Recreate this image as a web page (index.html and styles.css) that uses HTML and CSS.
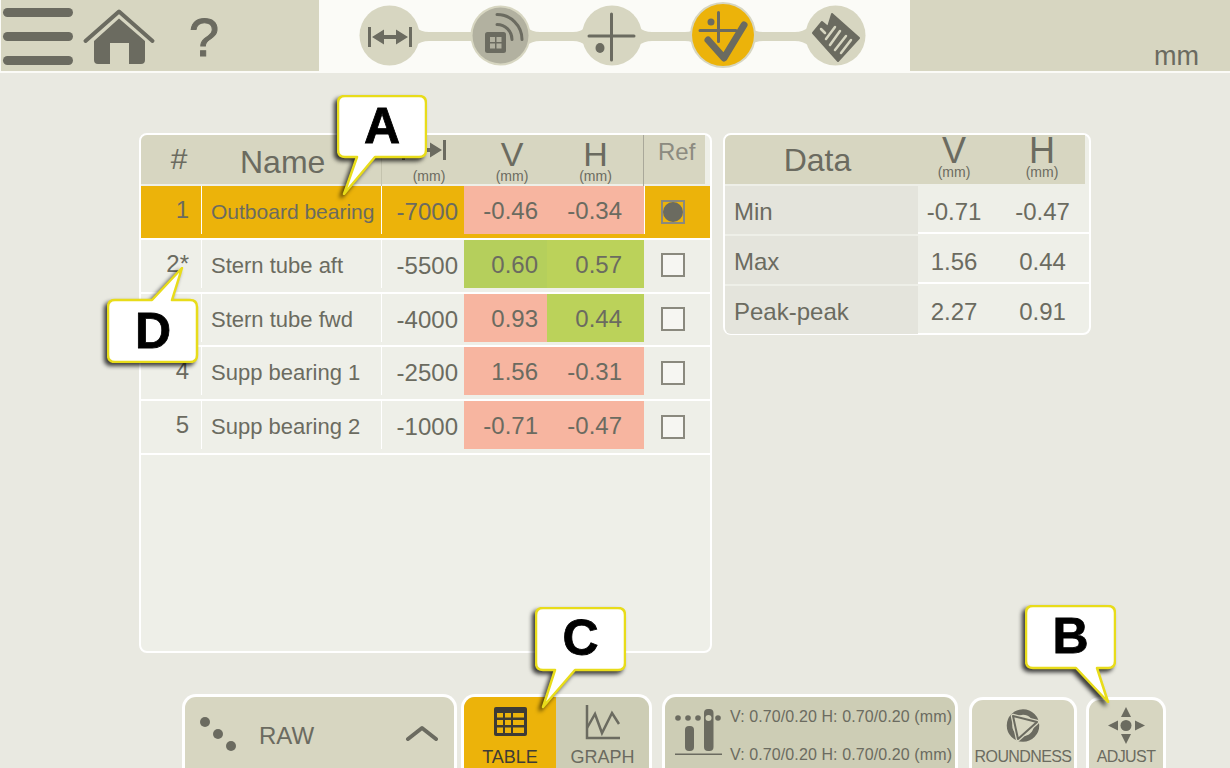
FILE: index.html
```html
<!DOCTYPE html>
<html lang="en">
<head>
    <meta charset="UTF-8">
    <title>Alignment result table</title>
    <link rel="stylesheet" href="styles.css">
</head>
<body>
    <header class="topbar">
        <div class="topbar-left">
            <svg class="menu-icon" width="74" height="71" viewBox="0 0 74 71">
                <rect x="2" y="8" width="70" height="9" rx="4.5"/>
                <rect x="2" y="32" width="70" height="9" rx="4.5"/>
                <rect x="2" y="56" width="70" height="9" rx="4.5"/>
            </svg>
            <svg class="home-icon" width="74" height="71" viewBox="82 0 74 71">
                <path class="home-roof" d="M85.5 41 119 11.5 152.5 41"/>
                <path d="M119 18.5 145 41V60q0 4-4 4H129V43H110V64H98q-4 0-4-4V41Z"/>
            </svg>
            <span class="help-icon">?</span>
        </div>
        <div class="topbar-steps">
            <svg width="591" height="71" viewBox="319 0 591 71">
                <g class="step-bg">
                    <path d="M415 27q6 5 14 5h41q8 0 12-5v19q-4-5-12-5h-41q-8 0-14 5Z"/>
                    <path d="M526 27q6 5 14 5h33q8 0 13-5v19q-5-5-13-5h-33q-8 0-14 5Z"/>
                    <path d="M638 27q6 5 14 5h33q8 0 12-5v19q-4-5-12-5h-33q-8 0-14 5Z"/>
                    <path d="M749 27q6 5 14 5h32q8 0 14-5v19q-6-5-14-5h-32q-8 0-14 5Z"/>
                    <circle cx="389.5" cy="35.5" r="30"/>
                    <circle cx="500.5" cy="35.5" r="30"/>
                    <circle cx="612" cy="35.5" r="30"/>
                    <circle cx="723" cy="35" r="33"/>
                    <circle cx="835.5" cy="35.5" r="30"/>
                </g>
                <circle class="step-current" cx="500.5" cy="35.5" r="28"/>
                <circle class="step-active" cx="723" cy="35" r="31"/>

                <g class="ink">
                    <rect x="368" y="27" width="3" height="20"/>
                    <rect x="409" y="27" width="3" height="20"/>
                    <path d="M372 37 384 29.5V35H396V29.5L408 37 396 44.500V39H384V44.500Z"/>
                </g>

                <g class="ink">
                    <rect x="485" y="32" width="21" height="21" rx="2.5"/>
                    <rect class="step-window" x="490" y="37" width="5" height="5"/>
                    <rect class="step-window" x="496.5" y="37" width="5" height="5"/>
                    <rect class="step-window" x="490" y="43.5" width="5" height="5"/>
                    <rect class="step-window" x="496.5" y="43.5" width="5" height="5"/>
                </g>
                <path class="ink-line" d="M497 14.5A25 25 0 0 1 522 39.5M497 24.5A15 15 0 0 1 512 39.5"/>

                <path class="ink-line" d="M611.5 14V60M589 36H634"/>
                <ellipse class="ink" cx="600" cy="48" rx="4.5" ry="5"/>

                <path class="ink-line" d="M718.5 12.5V41.5M700 30.5H736"/>
                <circle class="ink" cx="711" cy="22" r="3.5"/>
                <path class="check-line" d="M708 40 724 58 744 25"/>

                <path class="ink floppy-body" d="M832 14 859 38 838 61 813 33 822 22 828 27Z"/>
                <path class="floppy-stripes" d="M835 27 826 39M840 31 830 45M846 36 835 50M851 40 841 53"/>
                <path class="floppy-stripes" d="M821 29 825 33"/>
            </svg>
        </div>
        <div class="topbar-right"><span class="unit">mm</span></div>
    </header>

    <main class="content">
        <section class="panel results">
            <div class="results-head">
                <div class="head-num">#</div>
                <div class="head-name">Name</div>
                <div class="head-axis head-pos">
                    <svg class="distance-icon" width="48" height="22" viewBox="366 26 48 22">
                        <g class="ink">
                            <rect x="368" y="27" width="3" height="20"/>
                            <rect x="409" y="27" width="3" height="20"/>
                            <path d="M372 37 384 29.5V35H396V29.5L408 37 396 44.500V39H384V44.500Z"/>
                        </g>
                    </svg>
                    <small>(mm)</small>
                </div>
                <div class="head-axis head-v"><span>V</span><small>(mm)</small></div>
                <div class="head-axis"><span>H</span><small>(mm)</small></div>
                <div class="head-ref">Ref</div>
            </div>

            <div class="result-row selected">
                <div class="cell num">1</div>
                <div class="cell name small-name">Outboard bearing</div>
                <div class="cell pos">-7000</div>
                <div class="cell val-v bad">-0.46</div>
                <div class="cell val-h bad">-0.34</div>
                <div class="cell ref"><span class="checkbox checked"></span></div>
            </div>
            <div class="result-row">
                <div class="cell num">2*</div>
                <div class="cell name">Stern tube aft</div>
                <div class="cell pos">-5500</div>
                <div class="cell val-v good">0.60</div>
                <div class="cell val-h good-h">0.57</div>
                <div class="cell ref"><span class="checkbox"></span></div>
            </div>
            <div class="result-row">
                <div class="cell num">3</div>
                <div class="cell name">Stern tube fwd</div>
                <div class="cell pos">-4000</div>
                <div class="cell val-v bad">0.93</div>
                <div class="cell val-h good-h">0.44</div>
                <div class="cell ref"><span class="checkbox"></span></div>
            </div>
            <div class="result-row">
                <div class="cell num">4</div>
                <div class="cell name">Supp bearing 1</div>
                <div class="cell pos">-2500</div>
                <div class="cell val-v bad">1.56</div>
                <div class="cell val-h bad">-0.31</div>
                <div class="cell ref"><span class="checkbox"></span></div>
            </div>
            <div class="result-row">
                <div class="cell num">5</div>
                <div class="cell name">Supp bearing 2</div>
                <div class="cell pos">-1000</div>
                <div class="cell val-v bad">-0.71</div>
                <div class="cell val-h bad">-0.47</div>
                <div class="cell ref"><span class="checkbox"></span></div>
            </div>
        </section>

        <section class="panel summary">
            <div class="summary-head">
                <div class="summary-title">Data</div>
                <div class="head-axis"><span>V</span><small>(mm)</small></div>
                <div class="head-axis summary-h"><span>H</span><small>(mm)</small></div>
            </div>
            <div class="summary-row">
                <div class="summary-label">Min</div>
                <div class="summary-val">-0.71</div>
                <div class="summary-val">-0.47</div>
            </div>
            <div class="summary-row">
                <div class="summary-label">Max</div>
                <div class="summary-val">1.56</div>
                <div class="summary-val">0.44</div>
            </div>
            <div class="summary-row">
                <div class="summary-label">Peak-peak</div>
                <div class="summary-val">2.27</div>
                <div class="summary-val">0.91</div>
            </div>
        </section>
    </main>

    <footer class="toolbar">
        <div class="tool tool-raw">
            <svg width="54" height="40" viewBox="197 714 54 40">
                <circle class="ink" cx="205" cy="722" r="5"/>
                <circle class="ink" cx="218" cy="734" r="5"/>
                <circle class="ink" cx="231" cy="746" r="5"/>
            </svg>
            <span class="raw-label">RAW</span>
            <svg class="raw-chevron" width="34" height="16" viewBox="404 725 34 16">
                <path d="M407 739 421 728 435 739"/>
            </svg>
        </div>

        <div class="tool tool-views">
            <div class="view view-on">
                <svg width="33" height="30" viewBox="494 707 33 30">
                    <rect class="table-frame" x="494" y="707" width="33" height="29" rx="2"/>
                    <g class="table-cells">
                        <rect x="497" y="713" width="6" height="4.500"/><rect x="505" y="713" width="6" height="4.500"/><rect x="513" y="713" width="11" height="4.500"/>
                        <rect x="497" y="720" width="6" height="5"/><rect x="505" y="720" width="6" height="5"/><rect x="513" y="720" width="11" height="5"/>
                        <rect x="497" y="727.500" width="6" height="5.500"/><rect x="505" y="727.500" width="6" height="5.500"/><rect x="513" y="727.500" width="11" height="5.500"/>
                    </g>
                </svg>
                <span>TABLE</span>
            </div>
            <div class="view">
                <svg class="graph-icon" width="36" height="36" viewBox="586 703 36 36">
                    <path d="M588 704V737H621"/>
                    <path d="M588 727 596 713 603 732 613 712 620 723"/>
                </svg>
                <span>GRAPH</span>
            </div>
        </div>

        <div class="tool tool-info">
            <svg class="info-icon" width="50" height="50" viewBox="674 706 50 50">
                <circle class="ink" cx="678" cy="718" r="2.8"/>
                <circle class="ink" cx="688" cy="718" r="2.8"/>
                <circle class="ink" cx="698" cy="718" r="2.8"/>
                <circle class="ink" cx="718" cy="718" r="2.8"/>
                <rect class="ink" x="685" y="726" width="9" height="25" rx="4"/>
                <rect class="ink" x="704" y="709" width="9.5" height="42" rx="4"/>
                <circle class="info-dot" cx="708.5" cy="718" r="3"/>
                <rect class="ink" x="675" y="753.5" width="47" height="1.5"/>
            </svg>
            <div class="info-lines">
                <div>V: 0.70/0.20 H: 0.70/0.20 (mm)</div>
                <div>V: 0.70/0.20 H: 0.70/0.20 (mm)</div>
            </div>
        </div>

        <div class="tool tool-small tool-round">
            <svg width="36" height="40" viewBox="1004 706 36 40">
                <circle class="round-ring" cx="1022" cy="725.5" r="13.5"/>
                <path class="round-gap" d="M1012 716 1036 722 1017 739Z"/>
                <path class="round-tri" d="M1012 716 1036 722 1017 739Z"/>
            </svg>
            <span>ROUNDNESS</span>
        </div>

        <div class="tool tool-small tool-adjust">
            <svg width="40" height="40" viewBox="1104 706 40 40">
                <g class="ink">
                    <circle cx="1124" cy="725.5" r="5.5"/>
                    <path d="M1124 707 1129 717H1119Z"/>
                    <path d="M1124 744 1129 734H1119Z"/>
                    <path d="M1106 725.5 1116 720.5V730.5Z"/>
                    <path d="M1143 725.5 1133 720.5V730.5Z"/>
                </g>
            </svg>
            <span>ADJUST</span>
        </div>
    </footer>

    <!-- manual callouts drawn over the screen -->
    <div class="callout callout-a">
        <svg width="90" height="100" viewBox="0 0 90 100"><path d="M8 1H82Q89 1 89 8V55Q89 62 82 62H38L7 99 20 62H8Q1 62 1 55V8Q1 1 8 1Z"/></svg>
        <span>A</span>
    </div>
    <div class="callout callout-d">
        <svg width="92" height="96" viewBox="0 0 92 96"><path d="M8 33H45L75 1 65 33H83Q90 33 90 40V88Q90 95 83 95H8Q1 95 1 88V40Q1 33 8 33Z"/></svg>
        <span>D</span>
    </div>
    <div class="callout callout-c">
        <svg width="91" height="102" viewBox="0 0 91 102"><path d="M8 1H83Q90 1 90 8V56Q90 63 83 63H40L8 100 20 63H8Q1 63 1 56V8Q1 1 8 1Z"/></svg>
        <span>C</span>
    </div>
    <div class="callout callout-b">
        <svg width="91" height="98" viewBox="0 0 91 98"><path d="M8 1H83Q90 1 90 8V56Q90 63 83 63H72L83 97 51 63H8Q1 63 1 56V8Q1 1 8 1Z"/></svg>
        <span>B</span>
    </div>
</body>
</html>
```

FILE: styles.css
```css
* {
    margin: 0;
    padding: 0;
    box-sizing: border-box;
    font-family: "Liberation Sans", Arial, sans-serif;
}

body {
    position: relative;
    width: 1230px;
    height: 768px;
    overflow: hidden;
    background: #e9e9e1;
    color: #6b6b60;
}

.ink {
    fill: #6b6b60;
}

.ink-line {
    fill: none;
    stroke: #6b6b60;
    stroke-width: 3;
    stroke-linecap: round;
}

/* top bar */
.topbar {
    display: flex;
    height: 73px;
    border-bottom: 2px solid #fbfbf7;
    background: #fbfbf7;
}

.topbar-left {
    display: flex;
    align-items: flex-start;
    width: 318px;
    margin-left: 1px;
    background: #d7d6c1;
}

.menu-icon {
    fill: #6b6b60;
    margin-right: 7px;
}

.home-icon {
    fill: #6b6b60;
}

.home-roof {
    fill: none;
    stroke: #6b6b60;
    stroke-width: 4;
    stroke-linecap: round;
    stroke-linejoin: round;
}

.help-icon {
    margin-left: 33px;
    font-size: 54px;
    line-height: 74px;
    -webkit-text-stroke: 1px #6b6b60;
}

.topbar-steps {
    width: 591px;
}

.step-bg {
    fill: #d7d6c1;
}

.step-current {
    fill: #b2b1a0;
}

.step-active {
    fill: #ecb30a;
}

.step-window {
    fill: #b2b1a0;
}

.check-line {
    fill: none;
    stroke: #6b6b60;
    stroke-width: 7;
    stroke-linecap: round;
    stroke-linejoin: round;
}

.floppy-body {
    stroke: #6b6b60;
    stroke-width: 2;
    stroke-linejoin: round;
}

.floppy-stripes {
    fill: none;
    stroke: #d7d6c1;
    stroke-width: 2.5;
    stroke-linecap: round;
}

.topbar-right {
    flex: 1;
    display: flex;
    justify-content: flex-end;
    align-items: flex-end;
    padding-right: 31px;
    background: #d7d6c1;
}

.unit {
    font-size: 27px;
    line-height: 30px;
}

/* tables */
.content {
    display: flex;
    align-items: flex-start;
    gap: 11px;
    height: 520px;
    margin: 60px 0 0 139px;
}

.panel {
    border: 2px solid #fff;
    border-radius: 8px;
    background: #eeefe8;
}

.results {
    width: 573px;
    height: 520px;
}

.results-head {
    display: grid;
    grid-template-columns: 60px 180px 83px 83px 97px 61px;
    width: 564px;
    height: 49px;
    margin-bottom: 2px;
    border-radius: 6px 0 0 0;
    background: #d7d6c1;
}

.head-num {
    padding-left: 16px;
    text-align: center;
    font-size: 30px;
    line-height: 48px;
}

.head-name {
    padding-left: 39px;
    font-size: 32px;
    line-height: 54px;
}

.head-axis {
    display: flex;
    flex-direction: column;
    align-items: center;
}

.head-axis span {
    margin-top: 4px;
    font-size: 34px;
    line-height: 30px;
}

.head-axis small {
    font-size: 14px;
    line-height: 14px;
}

.head-pos {
    border-left: 1px solid #c4c3ae;
}

.head-pos small {
    margin-left: 12px;
}

.head-v {
    padding-left: 13px;
}

.distance-icon {
    margin: 4px 0 8px 2px;
}

.head-ref {
    margin-left: -1px;
    border-left: 1px solid #a9a89a;
    padding-left: 14px;
    font-size: 24px;
    line-height: 34px;
    color: #8c8b80;
}

.result-row {
    display: grid;
    grid-template-columns: 61px 179px 83px 83px 97px 65px;
    align-items: start;
    height: 53.75px;
    border-bottom: 2px solid #fff;
}

.result-row.selected {
    background: #ecb30a;
}

.cell {
    height: 48px;
    line-height: 52px;
    font-size: 24px;
}

.num {
    border-right: 1px solid #fff;
    padding-right: 12px;
    text-align: right;
    line-height: 48px;
}

.name {
    padding-left: 9px;
    font-size: 22px;
}

.small-name {
    font-size: 21px;
}

.pos {
    border-left: 1px solid #fff;
    padding-right: 6px;
    text-align: right;
}

.val-v,
.val-h {
    line-height: 50px;
    text-align: right;
}

.val-v {
    padding-right: 9px;
}

.val-h {
    padding-right: 22px;
}

.bad {
    background: #f7b5a0;
}

.good {
    background: #b5cf5c;
}

.good-h {
    background: #bbd25a;
}

.ref {
    display: flex;
    align-items: center;
    padding: 3px 0 0 17px;
}

.selected .ref {
    border-left: 1px solid #fff;
    padding-left: 16px;
}

.checkbox {
    display: flex;
    align-items: center;
    justify-content: center;
    width: 24px;
    height: 24px;
    border: 2px solid #8a897e;
    background: #f6f6f2;
}

.checkbox.checked {
    background: #ecb30a;
}

.checkbox.checked::after {
    content: "";
    width: 20px;
    height: 20px;
    border-radius: 50%;
    background: #6b6b60;
}

.summary {
    width: 368px;
    height: 202px;
}

.summary-head {
    display: grid;
    grid-template-columns: 193px 72px 95px;
    width: 360px;
    height: 49px;
    border-radius: 6px 0 0 0;
    background: #d7d6c1;
}

.summary-title {
    padding-right: 8px;
    text-align: center;
    font-size: 32px;
    line-height: 50px;
}

.summary-head .head-axis span {
    margin-top: 2px;
    font-size: 36px;
    line-height: 28px;
}

.summary-h {
    padding-left: 9px;
}

.summary-row {
    display: grid;
    grid-template-columns: 193px 72px 100px;
    height: 50px;
    padding-top: 2px;
    box-shadow: 0 -2px 0 #fff inset;
    font-size: 24px;
    line-height: 52px;
}

.summary-row:last-child {
    box-shadow: none;
}

.summary-label {
    height: 48px;
    padding-left: 9px;
    background: #e4e4dc;
}

.summary-row:last-child .summary-label {
    border-radius: 0 0 0 6px;
}

.summary-val {
    height: 48px;
    text-align: center;
}

.summary-val:last-child {
    padding-left: 5px;
}

/* bottom toolbar */
.toolbar {
    display: flex;
    align-items: flex-start;
    margin: 41px 0 0 182px;
}

.tool {
    border: 3px solid #fff;
    border-bottom: none;
    border-radius: 14px 14px 0 0;
    height: 74px;
    background: #d7d6c1;
    overflow: hidden;
}

.tool-raw {
    display: flex;
    width: 275px;
    padding: 17px 0 0 12px;
}

.raw-label {
    margin-left: 8px;
    font-size: 24px;
    line-height: 44px;
}

.raw-chevron {
    margin: 11px 0 0 91px;
    fill: none;
    stroke: #6b6b60;
    stroke-width: 4;
    stroke-linecap: round;
    stroke-linejoin: round;
}

.tool-views {
    display: flex;
    width: 191px;
    margin-left: 4px;
    background: #cdcdb5;
}

.view {
    display: flex;
    flex-direction: column;
    align-items: center;
    width: 93px;
    padding-top: 7px;
    font-size: 18px;
    line-height: 18px;
}

.view-on {
    width: 92px;
    padding-top: 10px;
    background: #ecb30a;
    color: #3d3b36;
}

.view-on svg {
    margin-bottom: 11px;
}

.table-frame {
    fill: #3d3b36;
}

.table-cells {
    fill: #ecb30a;
}

.graph-icon {
    margin-bottom: 8px;
    fill: none;
    stroke: #6b6b60;
    stroke-width: 2.5;
}

.tool-info {
    display: flex;
    width: 296px;
    margin-left: 10px;
    padding-left: 9px;
    background: #cdcdb5;
}

.info-icon {
    margin-top: 9px;
    flex: none;
}

.info-dot {
    fill: #cdcdb5;
}

.info-lines {
    margin-left: 6px;
    padding-top: 1px;
    font-size: 16px;
    letter-spacing: 0.1px;
    line-height: 38px;
    white-space: nowrap;
}

.tool-small {
    display: flex;
    flex-direction: column;
    align-items: center;
    height: 71px;
    margin-top: 3px;
    padding-top: 6px;
    font-size: 16px;
    line-height: 18px;
    white-space: nowrap;
}

.tool-small span {
    margin-top: 2px;
}

.tool-round span {
    letter-spacing: -0.6px;
}

.tool-adjust span {
    letter-spacing: -0.6px;
}

.tool-round {
    width: 108px;
    margin-left: 11px;
}

.tool-adjust {
    width: 80px;
    margin-left: 9px;
}

.round-ring {
    fill: none;
    stroke: #6b6b60;
    stroke-width: 5.5;
}

.round-gap {
    fill: none;
    stroke: #d7d6c1;
    stroke-width: 4.5;
    stroke-linejoin: round;
}

.round-tri {
    fill: none;
    stroke: #6b6b60;
    stroke-width: 2;
    stroke-linejoin: round;
}

/* callouts */
.callout {
    position: absolute;
    z-index: 5;
    filter: drop-shadow(-3px 3px 2px rgba(0, 0, 0, 0.75));
}

.callout svg {
    display: block;
    fill: #fff;
    stroke: #e8dc1a;
    stroke-width: 2.5;
    stroke-linejoin: round;
}

.callout span {
    position: absolute;
    left: 0;
    width: 100%;
    height: 62px;
    text-align: center;
    font-size: 50px;
    font-weight: bold;
    line-height: 62px;
    color: #000;
    -webkit-text-stroke: 0.8px #000;
}

.callout-a {
    left: 337px;
    top: 95px;
}

.callout-a span,
.callout-b span,
.callout-c span {
    top: 0;
}

.callout-d {
    left: 107px;
    top: 267px;
}

.callout-d span {
    top: 33px;
}

.callout-c {
    left: 535px;
    top: 607px;
}

.callout-b {
    left: 1025px;
    top: 605px;
}
```
